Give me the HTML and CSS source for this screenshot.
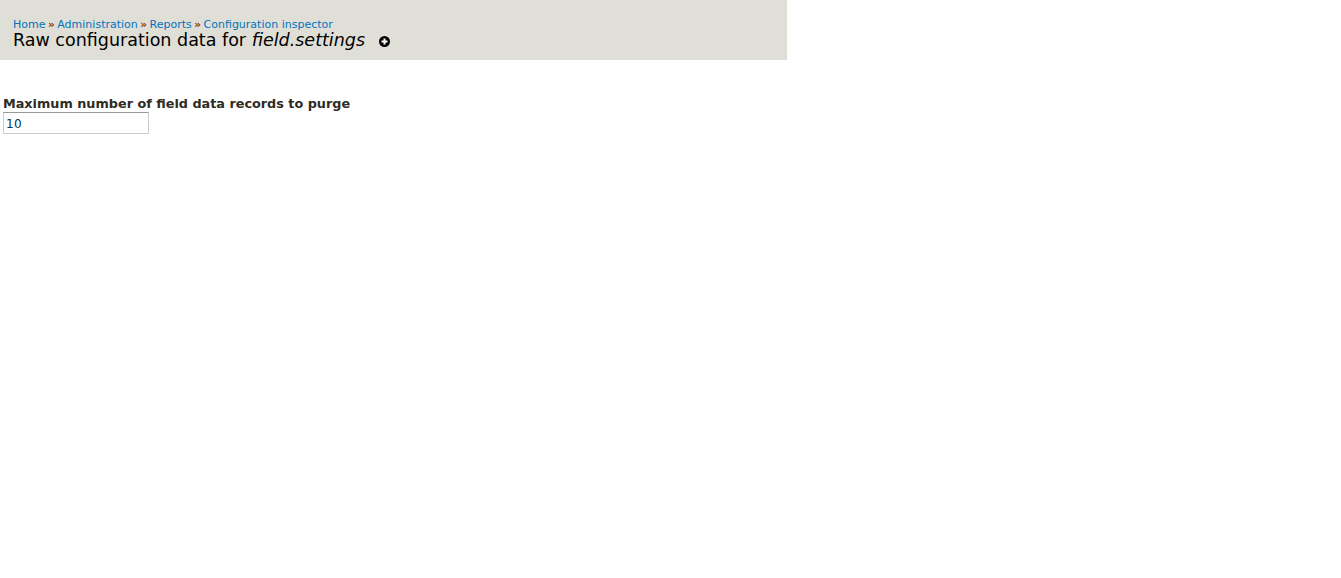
FILE: index.html
```html
<!DOCTYPE html>
<html lang="en">
<head>
    <meta charset="UTF-8">
    <title>Raw configuration data for field.settings</title>
    <link rel="stylesheet" href="styles.css">
</head>
<body>
    <div class="page-header">
        <div class="breadcrumb">
            <a href="#">Home</a> <span class="sep">»</span>
            <a href="#">Administration</a> <span class="sep">»</span>
            <a href="#">Reports</a> <span class="sep">»</span>
            <a href="#">Configuration inspector</a>
        </div>
        <h1 class="page-title">
            Raw configuration data for <em>field.settings</em>
            <svg class="add-icon" width="11" height="11" viewBox="0 0 11 11">
                <circle cx="5.5" cy="5.5" r="5.5" fill="#000"/>
                <path d="M5.5 2.5v6M2.5 5.5h6" stroke="#fff" stroke-width="2"/>
            </svg>
        </h1>
    </div>
    <div class="form-item">
        <label class="form-label" for="purge">Maximum number of field data records to purge</label>
        <input class="form-text" id="purge" type="text" value="10">
    </div>
</body>
</html>
```

FILE: styles.css
```css
body {
    margin: 0;
    background-color: #fff;
    font-family: "DejaVu Sans", sans-serif;
    font-size: 12px;
    color: #2e2c24;
}

.page-header {
    width: 787px;
    height: 60px;
    box-sizing: border-box;
    padding: 17px 13px 0;
    background-color: #e0dfd7;
}

.breadcrumb {
    font-size: 11px;
    line-height: 14px;
}

.breadcrumb a {
    color: #0074bd;
    text-decoration: none;
}

.sep {
    margin: 0 -1px;
    font-size: 10.5px;
    font-weight: bold;
    color: #8a3a00;
}

.page-title {
    margin: 0;
    font-size: 17.5px;
    font-weight: normal;
    line-height: 16px;
    color: #000;
}

.add-icon {
    margin-left: 8px;
    vertical-align: -1px;
}

.form-item {
    margin-top: 36px;
    padding-left: 3px;
}

.form-label {
    display: block;
    font-size: 12.8px;
    font-weight: bold;
    line-height: 16px;
}

.form-text {
    display: block;
    width: 146px;
    height: 22px;
    box-sizing: border-box;
    padding: 2px 2px 0;
    border: 1px solid #ccc;
    border-top-color: #999;
    font-family: "DejaVu Sans", sans-serif;
    font-size: 12px;
    letter-spacing: 0.3px;
    color: #00344f;
}
```
